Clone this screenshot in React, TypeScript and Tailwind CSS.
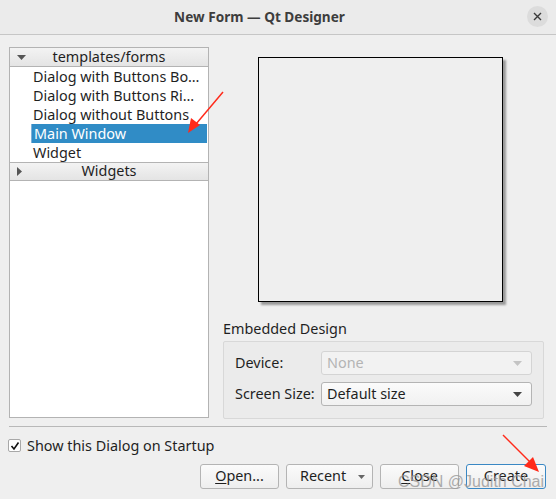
import React from "react";

const items = [
  "Dialog with Buttons Bo…",
  "Dialog with Buttons Ri…",
  "Dialog without Buttons",
];

function DownTri({ color }: { color: string }) {
  return (
    <svg width="9" height="5" viewBox="0 0 9 5">
      <polygon points="0,0 9,0 4.5,5" fill={color} />
    </svg>
  );
}

export default function App() {
  return (
    <div
      className="relative w-[556px] h-[499px] overflow-hidden bg-[#efefef] text-[14.4px] text-[#1f1f1f]"
      style={{ fontFamily: '"Noto Sans", "DejaVu Sans", sans-serif' }}
    >
      {/* Title bar */}
      <div className="relative flex h-[35px] items-center justify-center border-b border-[#c6c6c6] bg-[#ebebeb] pr-[37px]">
        <span className="text-[13.6px] font-bold text-[#3d3d3d]">New Form — Qt Designer</span>
        <div className="absolute right-[8px] top-[6px] flex h-[21px] w-[21px] items-center justify-center rounded-full bg-[#dcdcdc]">
          <svg width="9" height="9" viewBox="0 0 9 9">
            <path d="M1 1 L8 8 M8 1 L1 8" stroke="#3a3a3a" strokeWidth="1.4" />
          </svg>
        </div>
      </div>

      {/* Body */}
      <div className="flex px-[9px] pt-[12px]">
        {/* Left tree */}
        <div className="flex h-[371px] w-[200px] flex-col border border-[#b3b3b3] bg-white">
          <div className="relative flex h-[19px] items-center justify-center border-b border-[#b3b3b3] bg-gradient-to-b from-[#f3f3f3] to-[#e4e4e4]">
            <div className="absolute left-[7px] top-[7px]">
              <DownTri color="#555" />
            </div>
            <span className="leading-none">templates/forms</span>
          </div>
          {items.map((t) => (
            <div key={t} className="flex h-[19px] items-center pl-[23px] whitespace-nowrap">
              {t}
            </div>
          ))}
          <div className="ml-[21px] mr-[1px] flex h-[19px] items-center border-l border-[#7fb0d8] bg-[#308cc6] pl-[2px] text-white">
            Main Window
          </div>
          <div className="flex h-[19px] items-center pl-[23px]">Widget</div>
          <div className="relative flex h-[19px] items-center justify-center border-y border-[#b3b3b3] bg-gradient-to-b from-[#f3f3f3] to-[#e4e4e4]">
            <div className="absolute left-[7px] top-[4px]">
              <svg width="5" height="9" viewBox="0 0 5 9">
                <polygon points="0,0 5,4.5 0,9" fill="#555" />
              </svg>
            </div>
            <span className="leading-none">Widgets</span>
          </div>
        </div>

        {/* Right side */}
        <div className="flex flex-1 flex-col">
          <div className="ml-[49px] mt-[10px] h-[245px] w-[245px] border border-black bg-[#efefef] shadow-[3px_3px_2px_#9a9a9a]" />
          <div className="ml-[14px] mt-[17px] leading-[19px]">Embedded Design</div>
          <div className="ml-[14px] mt-[3px] flex h-[78px] w-[321px] flex-col gap-[7px] rounded-[2px] border border-[#d8d8d8] bg-[#ebebeb] px-[11px] pt-[9px]">
            <div className="flex items-center">
              <span className="w-[86px]">Device:</span>
              <div className="flex h-[24px] flex-1 items-center justify-between rounded-[3px] border border-[#d4d4d4] bg-[#f2f2f2] pl-[5px] pr-[9px] text-[#b4b4b4]">
                <span>None</span>
                <DownTri color="#c4c4c4" />
              </div>
            </div>
            <div className="flex items-center">
              <span className="w-[86px]">Screen Size:</span>
              <div className="flex h-[24px] flex-1 items-center justify-between rounded-[3px] border border-[#b4b4b4] bg-gradient-to-b from-[#fbfbfb] to-[#f1f1f1] pl-[5px] pr-[9px]">
                <span>Default size</span>
                <DownTri color="#444" />
              </div>
            </div>
          </div>
        </div>
      </div>

      {/* Separator */}
      <div className="mx-[9px] mt-[7px] h-px bg-[#b8b8b8]" />

      {/* Checkbox row */}
      <div className="ml-[8px] mt-[8px] flex items-center gap-[6px]">
        <div className="flex h-[13px] w-[13px] items-center justify-center rounded-[2px] border border-[#a8a8a8] bg-white">
          <svg width="10" height="10" viewBox="0 0 10 10">
            <path d="M1.5 5 L4 8 L8.5 1.5" stroke="#111" strokeWidth="1.6" fill="none" />
          </svg>
        </div>
        <span>Show this Dialog on Startup</span>
      </div>

      {/* Buttons */}
      <div className="mr-[10px] mt-[7px] flex justify-end gap-[7px]">
        <div className="flex h-[25px] w-[79px] items-center justify-center rounded-[3px] border border-[#b4b4b4] bg-gradient-to-b from-[#fbfbfb] to-[#eeeeee]">
          <span>
            <span className="underline underline-offset-2">O</span>pen...
          </span>
        </div>
        <div className="relative flex h-[25px] w-[87px] items-center rounded-[3px] border border-[#b4b4b4] bg-gradient-to-b from-[#fbfbfb] to-[#eeeeee] pl-[13px]">
          <span>Recent</span>
          <div className="absolute right-[7px] top-[10px]">
            <svg width="7" height="4" viewBox="0 0 7 4">
              <polygon points="0,0 7,0 3.5,4" fill="#666" />
            </svg>
          </div>
        </div>
        <div className="flex h-[25px] w-[79px] items-center justify-center rounded-[3px] border border-[#b4b4b4] bg-gradient-to-b from-[#fbfbfb] to-[#eeeeee]">
          <span>
            <span className="underline underline-offset-2">C</span>lose
          </span>
        </div>
        <div className="flex h-[25px] w-[80px] items-center justify-center rounded-[3px] border border-[#3a88c4] bg-gradient-to-b from-[#fbfbfb] to-[#eeeeee]">
          <span>Create</span>
        </div>
      </div>

      {/* Watermark */}
      <div
        className="pointer-events-none absolute left-[398px] top-[474px] text-[16px] leading-none text-[#9a9a9a] opacity-80"
        style={{ fontFamily: '"Liberation Sans", Arial, sans-serif' }}
      >
        CSDN @Judith Chai
      </div>

      {/* Red annotation arrows */}
      <svg className="pointer-events-none absolute left-0 top-0" width="556" height="499">
        <line x1="223" y1="92" x2="196" y2="124" stroke="#ff2a1a" strokeWidth="1.5" />
        <polygon points="188,133 191,118 200,125" fill="#ff2a1a" />
        <line x1="503" y1="435" x2="531" y2="463" stroke="#ff2a1a" strokeWidth="1.5" />
        <polygon points="539,472 524,466 533,457" fill="#ff2a1a" />
      </svg>
    </div>
  );
}
